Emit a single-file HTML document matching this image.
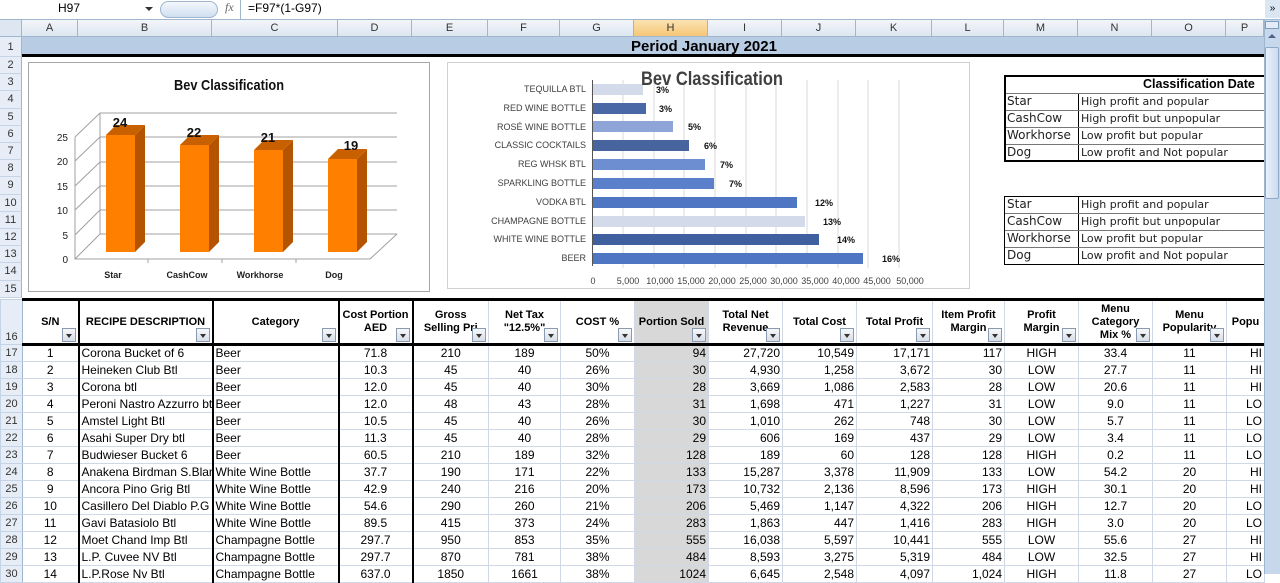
<!DOCTYPE html>
<html><head><meta charset="utf-8"><style>
*{margin:0;padding:0;box-sizing:border-box}
body{width:1280px;height:574px;overflow:hidden;background:#fff;font-family:"Liberation Sans",Arial,sans-serif;position:relative;color:#000}
.abs{position:absolute}
.ch{position:absolute;top:20px;height:17px;font-size:11px;color:#333;text-align:center;line-height:17px;background:linear-gradient(#f3f6fa,#dde6f1);border-right:1px solid #9eb6ce;border-bottom:1px solid #9eb6ce}
.rh{position:absolute;left:0;width:22px;font-size:11px;color:#333;text-align:center;background:#e6edf6;border-right:1px solid #9eb6ce;border-bottom:1px solid #c5d3e6}
table{position:absolute;left:0;top:298px;width:1264px;border-collapse:collapse;table-layout:fixed;font-size:12px}
td{height:17px;border:1px solid #d0d7e5;white-space:nowrap;overflow:hidden;padding:0 2px;line-height:15px}
td.r0{background:#e6edf6;color:#333;text-align:center;border-color:#c5d3e6;border-right:1px solid #9eb6ce;padding:0;font-size:11px}
tr.hd td{height:45px;font-weight:bold;text-align:center;white-space:normal;line-height:13px;position:relative;border-top:3px solid #000;border-bottom:3px solid #000;vertical-align:middle;font-size:11px}
tr.hd td.r0{font-weight:normal;vertical-align:bottom;border-top:1px solid #c5d3e6;border-bottom:1px solid #c5d3e6}
.dd{position:absolute;right:2px;bottom:1px;width:14px;height:14px;border:1px solid #8a9bb0;background:linear-gradient(#f5f7fa,#d8dee8)}
.dd:after{content:"";position:absolute;left:3px;top:5px;border-left:3.5px solid transparent;border-right:3.5px solid transparent;border-top:4px solid #333}
.c{text-align:center}.r{text-align:right}.l{text-align:left}
.h{background:#d8d8d8}
.tb{border-left:2px solid #000!important}
.ct{position:absolute;font-size:12px;font-family:"DejaVu Sans",sans-serif;color:#222;line-height:17px}
</style></head><body>
<div class="abs" style="left:0;top:0;width:1280px;height:20px;background:#fff;border-bottom:1px solid #9eb6ce"></div>
<div class="abs" style="left:58px;top:1px;font-size:12px">H97</div>
<div class="abs" style="left:145px;top:7px;border-left:4px solid transparent;border-right:4px solid transparent;border-top:4px solid #333"></div>
<div class="abs" style="left:160px;top:1px;width:58px;height:17px;border-radius:9px;background:linear-gradient(#f4f8fc,#cfdff0);border:1px solid #9eb6ce"></div>
<div class="abs" style="left:225px;top:0;font-size:12px;font-style:italic;font-family:'Liberation Serif',serif;color:#666">fx</div>
<div class="abs" style="left:240px;top:0;width:1px;height:20px;background:#9eb6ce"></div>
<div class="abs" style="left:248px;top:1px;font-size:12px">=F97*(1-G97)</div>
<div class="abs" style="left:1265px;top:0;width:15px;height:18px;background:#dbe6f3;font-size:10px;text-align:center;line-height:18px">»</div>
<div class="ch" style="left:0;width:22px;background:#dde6f1"></div>
<div class="ch" style="left:22px;width:56px">A</div>
<div class="ch" style="left:78px;width:134px">B</div>
<div class="ch" style="left:212px;width:126px">C</div>
<div class="ch" style="left:338px;width:74px">D</div>
<div class="ch" style="left:412px;width:76px">E</div>
<div class="ch" style="left:488px;width:72px">F</div>
<div class="ch" style="left:560px;width:74px">G</div>
<div class="ch" style="left:634px;width:74px;background:linear-gradient(#fbe3b3,#f6c676)">H</div>
<div class="ch" style="left:708px;width:74px">I</div>
<div class="ch" style="left:782px;width:74px">J</div>
<div class="ch" style="left:856px;width:76px">K</div>
<div class="ch" style="left:932px;width:72px">L</div>
<div class="ch" style="left:1004px;width:74px">M</div>
<div class="ch" style="left:1078px;width:74px">N</div>
<div class="ch" style="left:1152px;width:74px">O</div>
<div class="ch" style="left:1226px;width:38px">P</div>
<div class="abs" style="left:22px;top:37px;width:1242px;height:20px;background:#b8cce4;border-bottom:3px solid #000;text-align:center;font-weight:bold;font-size:15px;line-height:20px;padding-left:122px">Period January 2021</div>
<div class="rh" style="top:37px;height:20px;line-height:20px">1</div>
<div class="rh" style="top:57px;height:17.2px;line-height:17px">2</div>
<div class="rh" style="top:74.2px;height:17.2px;line-height:17px">3</div>
<div class="rh" style="top:91.4px;height:17.2px;line-height:17px">4</div>
<div class="rh" style="top:108.6px;height:17.2px;line-height:17px">5</div>
<div class="rh" style="top:125.8px;height:17.2px;line-height:17px">6</div>
<div class="rh" style="top:143px;height:17.2px;line-height:17px">7</div>
<div class="rh" style="top:160.2px;height:17.2px;line-height:17px">8</div>
<div class="rh" style="top:177.4px;height:17.2px;line-height:17px">9</div>
<div class="rh" style="top:194.6px;height:17.2px;line-height:17px">10</div>
<div class="rh" style="top:211.8px;height:17.2px;line-height:17px">11</div>
<div class="rh" style="top:229px;height:17.2px;line-height:17px">12</div>
<div class="rh" style="top:246.2px;height:17.2px;line-height:17px">13</div>
<div class="rh" style="top:263.4px;height:17.2px;line-height:17px">14</div>
<div class="rh" style="top:280.6px;height:17.4px;line-height:17px">15</div>

<svg class="abs" style="left:0;top:0" width="1264" height="298" font-family="Liberation Sans,sans-serif">
<rect x="28.5" y="62.5" width="401" height="229" fill="#fff" stroke="#a6a6a6"/>
<text x="229" y="90" text-anchor="middle" font-size="15" font-weight="bold" fill="#111" textLength="110" lengthAdjust="spacingAndGlyphs">Bev Classification</text>
<g stroke="#a0a0a0" fill="none" stroke-width="1">
<path d="M100 113H397M100 137H397M100 162H397M100 186H397M100 210H397M100 234H397"/>
<path d="M75 137L100 113M75 161L100 137M75 186L100 162M75 210L100 186M75 235L100 210M75 259L100 234"/>
<path d="M75 137V259H370L397 234M100 113V234"/>
<path d="M148 259v4M222 259v4M296 259v4"/>
</g>
<g font-size="10" fill="#222" text-anchor="end"><text x="68" y="141">25</text><text x="68" y="165">20</text><text x="68" y="190">15</text><text x="68" y="214">10</text><text x="68" y="239">5</text><text x="68" y="263">0</text></g>
<g>
<path d="M135 135l10-10V242l-10 10z" fill="#b45400"/><path d="M106 135l10-10h29l-10 10z" fill="#c96000"/><rect x="106" y="135" width="29" height="117" fill="#ff7f00"/>
<path d="M209 145l10-10V242l-10 10z" fill="#b45400"/><path d="M180 145l10-10h29l-10 10z" fill="#c96000"/><rect x="180" y="145" width="29" height="107" fill="#ff7f00"/>
<path d="M283 150l10-10V242l-10 10z" fill="#b45400"/><path d="M254 150l10-10h29l-10 10z" fill="#c96000"/><rect x="254" y="150" width="29" height="102" fill="#ff7f00"/>
<path d="M357 159l10-10V242l-10 10z" fill="#b45400"/><path d="M328 159l10-10h29l-10 10z" fill="#c96000"/><rect x="328" y="159" width="29" height="93" fill="#ff7f00"/>
</g>
<g font-size="13" font-weight="bold" fill="#111" text-anchor="middle"><text x="120" y="127">24</text><text x="194" y="137">22</text><text x="268" y="142">21</text><text x="351" y="150">19</text></g>
<g font-size="9" font-weight="bold" fill="#222" text-anchor="middle"><text x="113" y="278">Star</text><text x="187" y="278">CashCow</text><text x="260" y="278">Workhorse</text><text x="334" y="278">Dog</text></g>

<rect x="447.5" y="62.5" width="522" height="226" fill="#fff" stroke="#d0d0d0"/>
<g stroke="#d9d9d9"><path d="M623 80V268M654 80V268M684 80V268M715 80V268M746 80V268M776 80V268M807 80V268M838 80V268M868 80V268M899 80V268"/></g>
<g>
<rect x="592" y="84" width="51" height="11" fill="#d3dae9"/>
<rect x="592" y="103" width="54" height="11" fill="#4a67a6"/>
<rect x="592" y="121" width="81" height="11" fill="#8fa5d7"/>
<rect x="592" y="140" width="97" height="11" fill="#48649f"/>
<rect x="592" y="159" width="113" height="11" fill="#6d8ed0"/>
<rect x="592" y="178" width="122" height="11" fill="#5a80cb"/>
<rect x="592" y="197" width="205" height="11" fill="#4f76c2"/>
<rect x="592" y="216" width="213" height="11" fill="#d3dae9"/>
<rect x="592" y="234" width="227" height="11" fill="#3f5f9f"/>
<rect x="592" y="253" width="271" height="11" fill="#4f76c2"/>
</g>
<path d="M592.5 80V266" stroke="#555"/>
<text x="712" y="85" text-anchor="middle" font-size="19" font-weight="bold" fill="#404040" textLength="142" lengthAdjust="spacingAndGlyphs">Bev Classification</text>
<g font-size="9" fill="#404040" text-anchor="end">
<text x="586" y="92">TEQUILLA BTL</text><text x="586" y="111">RED WINE BOTTLE</text><text x="586" y="130">ROSÉ WINE BOTTLE</text><text x="586" y="148">CLASSIC  COCKTAILS</text><text x="586" y="167">REG WHSK BTL</text><text x="586" y="186">SPARKLING BOTTLE</text><text x="586" y="205">VODKA BTL</text><text x="586" y="224">CHAMPAGNE BOTTLE</text><text x="586" y="242">WHITE WINE BOTTLE</text><text x="586" y="261">BEER</text>
</g>
<g font-size="9" font-weight="bold" fill="#111">
<text x="656" y="93">3%</text><text x="659" y="112">3%</text><text x="688" y="130">5%</text><text x="704" y="149">6%</text><text x="720" y="168">7%</text><text x="729" y="187">7%</text><text x="815" y="206">12%</text><text x="823" y="225">13%</text><text x="837" y="243">14%</text><text x="882" y="262">16%</text>
</g>
<g font-size="9" fill="#404040" text-anchor="middle">
<text x="593" y="284">0</text><text x="628" y="284">5,000</text><text x="660" y="284">10,000</text><text x="691" y="284">15,000</text><text x="722" y="284">20,000</text><text x="753" y="284">25,000</text><text x="784" y="284">30,000</text><text x="815" y="284">35,000</text><text x="846" y="284">40,000</text><text x="877" y="284">45,000</text><text x="910" y="284">50,000</text>
</g>
</svg>

<div class="abs" style="left:1004px;top:75px;width:262px;height:87px;border:2px solid #000;border-right:none"></div>
<div class="abs" style="left:1078px;top:93px;width:1px;height:69px;background:#000"></div>
<div class="abs" style="left:1006px;top:93px;width:260px;height:1px;background:#777"></div>
<div class="abs" style="left:1006px;top:110px;width:260px;height:1px;background:#777"></div>
<div class="abs" style="left:1006px;top:127px;width:260px;height:1px;background:#777"></div>
<div class="abs" style="left:1006px;top:144px;width:260px;height:1px;background:#777"></div>
<div class="abs" style="left:1143px;top:76px;font-weight:bold;font-size:12.5px;line-height:17px">Classification Date</div>
<div class="ct" style="left:1007px;top:93px">Star</div><div class="ct" style="left:1081px;top:93px;font-size:11px">High profit and popular</div>
<div class="ct" style="left:1007px;top:110px">CashCow</div><div class="ct" style="left:1081px;top:110px;font-size:11px">High profit but unpopular</div>
<div class="ct" style="left:1007px;top:127px">Workhorse</div><div class="ct" style="left:1081px;top:127px;font-size:11px">Low profit but popular</div>
<div class="ct" style="left:1007px;top:144px">Dog</div><div class="ct" style="left:1081px;top:144px;font-size:11px">Low profit and Not popular</div>

<div class="abs" style="left:1004px;top:196px;width:262px;height:69px;border:1px solid #000;border-right:none"></div>
<div class="abs" style="left:1078px;top:196px;width:1px;height:69px;background:#000"></div>
<div class="abs" style="left:1005px;top:213px;width:260px;height:1px;background:#777"></div>
<div class="abs" style="left:1005px;top:230px;width:260px;height:1px;background:#777"></div>
<div class="abs" style="left:1005px;top:247px;width:260px;height:1px;background:#777"></div>
<div class="ct" style="left:1007px;top:196px">Star</div><div class="ct" style="left:1081px;top:196px;font-size:11px">High profit and popular</div>
<div class="ct" style="left:1007px;top:213px">CashCow</div><div class="ct" style="left:1081px;top:213px;font-size:11px">High profit but unpopular</div>
<div class="ct" style="left:1007px;top:230px">Workhorse</div><div class="ct" style="left:1081px;top:230px;font-size:11px">Low profit but popular</div>
<div class="ct" style="left:1007px;top:247px">Dog</div><div class="ct" style="left:1081px;top:247px;font-size:11px">Low profit and Not popular</div>

<table>
<colgroup><col style="width:22px"><col style="width:56px"><col style="width:134px"><col style="width:126px"><col style="width:74px"><col style="width:76px"><col style="width:72px"><col style="width:74px"><col style="width:74px"><col style="width:74px"><col style="width:74px"><col style="width:76px"><col style="width:72px"><col style="width:74px"><col style="width:74px"><col style="width:74px"><col style="width:38px"></colgroup>
<tr class="hd"><td class="r0">16</td><td>S/N<span class="dd"></span></td><td class="tb">RECIPE DESCRIPTION<span class="dd"></span></td><td class="tb">Category<span class="dd"></span></td><td class="tb">Cost Portion<br>AED<span class="dd"></span></td><td class="tb">Gross<br>Selling Pri<span class="dd"></span></td><td>Net Tax<br>"12.5%"<span class="dd"></span></td><td>COST %<span class="dd"></span></td><td class="h">Portion Sold<span class="dd"></span></td><td>Total Net<br>Revenue<span class="dd"></span></td><td>Total Cost<span class="dd"></span></td><td>Total Profit<span class="dd"></span></td><td>Item Profit<br>Margin<span class="dd"></span></td><td>Profit<br>Margin<span class="dd"></span></td><td>Menu<br>Category<br>Mix %<span class="dd"></span></td><td>Menu<br>Popularity<span class="dd"></span></td><td class="l">Popu</td></tr>
<tr><td class="r0">17</td><td class="c">1</td><td class="tb">Corona Bucket of 6</td><td class="tb">Beer</td><td class="c tb">71.8</td><td class="c tb">210</td><td class="c">189</td><td class="c">50%</td><td class="r h">94</td><td class="r">27,720</td><td class="r">10,549</td><td class="r">17,171</td><td class="r">117</td><td class="c">HIGH</td><td class="c">33.4</td><td class="c">11</td><td class="r">HI</td></tr>
<tr><td class="r0">18</td><td class="c">2</td><td class="tb">Heineken Club Btl</td><td class="tb">Beer</td><td class="c tb">10.3</td><td class="c tb">45</td><td class="c">40</td><td class="c">26%</td><td class="r h">30</td><td class="r">4,930</td><td class="r">1,258</td><td class="r">3,672</td><td class="r">30</td><td class="c">LOW</td><td class="c">27.7</td><td class="c">11</td><td class="r">HI</td></tr>
<tr><td class="r0">19</td><td class="c">3</td><td class="tb">Corona btl</td><td class="tb">Beer</td><td class="c tb">12.0</td><td class="c tb">45</td><td class="c">40</td><td class="c">30%</td><td class="r h">28</td><td class="r">3,669</td><td class="r">1,086</td><td class="r">2,583</td><td class="r">28</td><td class="c">LOW</td><td class="c">20.6</td><td class="c">11</td><td class="r">HI</td></tr>
<tr><td class="r0">20</td><td class="c">4</td><td class="tb">Peroni Nastro Azzurro btl</td><td class="tb">Beer</td><td class="c tb">12.0</td><td class="c tb">48</td><td class="c">43</td><td class="c">28%</td><td class="r h">31</td><td class="r">1,698</td><td class="r">471</td><td class="r">1,227</td><td class="r">31</td><td class="c">LOW</td><td class="c">9.0</td><td class="c">11</td><td class="r">LO</td></tr>
<tr><td class="r0">21</td><td class="c">5</td><td class="tb">Amstel Light Btl</td><td class="tb">Beer</td><td class="c tb">10.5</td><td class="c tb">45</td><td class="c">40</td><td class="c">26%</td><td class="r h">30</td><td class="r">1,010</td><td class="r">262</td><td class="r">748</td><td class="r">30</td><td class="c">LOW</td><td class="c">5.7</td><td class="c">11</td><td class="r">LO</td></tr>
<tr><td class="r0">22</td><td class="c">6</td><td class="tb">Asahi Super Dry btl</td><td class="tb">Beer</td><td class="c tb">11.3</td><td class="c tb">45</td><td class="c">40</td><td class="c">28%</td><td class="r h">29</td><td class="r">606</td><td class="r">169</td><td class="r">437</td><td class="r">29</td><td class="c">LOW</td><td class="c">3.4</td><td class="c">11</td><td class="r">LO</td></tr>
<tr><td class="r0">23</td><td class="c">7</td><td class="tb">Budwieser Bucket 6</td><td class="tb">Beer</td><td class="c tb">60.5</td><td class="c tb">210</td><td class="c">189</td><td class="c">32%</td><td class="r h">128</td><td class="r">189</td><td class="r">60</td><td class="r">128</td><td class="r">128</td><td class="c">HIGH</td><td class="c">0.2</td><td class="c">11</td><td class="r">LO</td></tr>
<tr><td class="r0">24</td><td class="c">8</td><td class="tb">Anakena Birdman S.Blanc</td><td class="tb">White Wine Bottle</td><td class="c tb">37.7</td><td class="c tb">190</td><td class="c">171</td><td class="c">22%</td><td class="r h">133</td><td class="r">15,287</td><td class="r">3,378</td><td class="r">11,909</td><td class="r">133</td><td class="c">LOW</td><td class="c">54.2</td><td class="c">20</td><td class="r">HI</td></tr>
<tr><td class="r0">25</td><td class="c">9</td><td class="tb">Ancora Pino Grig Btl</td><td class="tb">White Wine Bottle</td><td class="c tb">42.9</td><td class="c tb">240</td><td class="c">216</td><td class="c">20%</td><td class="r h">173</td><td class="r">10,732</td><td class="r">2,136</td><td class="r">8,596</td><td class="r">173</td><td class="c">HIGH</td><td class="c">30.1</td><td class="c">20</td><td class="r">HI</td></tr>
<tr><td class="r0">26</td><td class="c">10</td><td class="tb">Casillero Del Diablo P.G</td><td class="tb">White Wine Bottle</td><td class="c tb">54.6</td><td class="c tb">290</td><td class="c">260</td><td class="c">21%</td><td class="r h">206</td><td class="r">5,469</td><td class="r">1,147</td><td class="r">4,322</td><td class="r">206</td><td class="c">HIGH</td><td class="c">12.7</td><td class="c">20</td><td class="r">LO</td></tr>
<tr><td class="r0">27</td><td class="c">11</td><td class="tb">Gavi Batasiolo Btl</td><td class="tb">White Wine Bottle</td><td class="c tb">89.5</td><td class="c tb">415</td><td class="c">373</td><td class="c">24%</td><td class="r h">283</td><td class="r">1,863</td><td class="r">447</td><td class="r">1,416</td><td class="r">283</td><td class="c">HIGH</td><td class="c">3.0</td><td class="c">20</td><td class="r">LO</td></tr>
<tr><td class="r0">28</td><td class="c">12</td><td class="tb">Moet Chand Imp Btl</td><td class="tb">Champagne Bottle</td><td class="c tb">297.7</td><td class="c tb">950</td><td class="c">853</td><td class="c">35%</td><td class="r h">555</td><td class="r">16,038</td><td class="r">5,597</td><td class="r">10,441</td><td class="r">555</td><td class="c">LOW</td><td class="c">55.6</td><td class="c">27</td><td class="r">HI</td></tr>
<tr><td class="r0">29</td><td class="c">13</td><td class="tb">L.P. Cuvee NV Btl</td><td class="tb">Champagne Bottle</td><td class="c tb">297.7</td><td class="c tb">870</td><td class="c">781</td><td class="c">38%</td><td class="r h">484</td><td class="r">8,593</td><td class="r">3,275</td><td class="r">5,319</td><td class="r">484</td><td class="c">LOW</td><td class="c">32.5</td><td class="c">27</td><td class="r">HI</td></tr>
<tr><td class="r0">30</td><td class="c">14</td><td class="tb">L.P.Rose Nv Btl</td><td class="tb">Champagne Bottle</td><td class="c tb">637.0</td><td class="c tb">1850</td><td class="c">1661</td><td class="c">38%</td><td class="r h">1024</td><td class="r">6,645</td><td class="r">2,548</td><td class="r">4,097</td><td class="r">1,024</td><td class="c">HIGH</td><td class="c">11.8</td><td class="c">27</td><td class="r">LO</td></tr>
</table>

<div class="abs" style="left:1264px;top:20px;width:16px;height:554px;background:#c8d8ec;border-left:1px solid #9eb6ce"></div>
<div class="abs" style="left:1265px;top:21px;width:14px;height:8px;background:#e3ecf7;border:1px solid #7f9db9"></div>
<div class="abs" style="left:1268px;top:34px;border-left:4px solid transparent;border-right:4px solid transparent;border-bottom:4px solid #4d6185"></div>
<div class="abs" style="left:1265px;top:47px;width:14px;height:152px;background:linear-gradient(90deg,#e8f0fa,#cddcef);border:1px solid #8fa8c8;border-radius:2px"></div>
</body></html>
